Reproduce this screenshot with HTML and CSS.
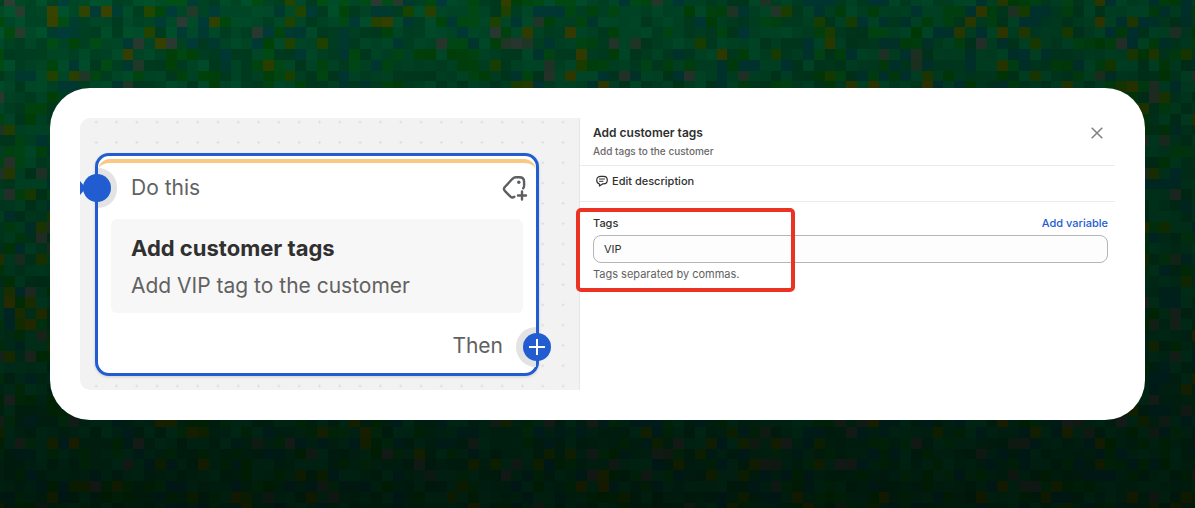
FILE: index.html
```
<!DOCTYPE html>
<html lang="en">
<head>
    <meta charset="UTF-8">
    <meta name="viewport" content="width=device-width, initial-scale=1.0">
    <title>Add customer tags</title>
    <link rel="stylesheet" href="styles.css">
</head>
<body>
    <canvas class="mosaic" id="mosaic" aria-hidden="true"></canvas>

    <main class="card">
        <section class="workflow">
            <svg class="grid-dots" aria-hidden="true">
                <defs>
                    <pattern id="dots" x="6" y="-6" width="20.3" height="20.3" patternUnits="userSpaceOnUse">
                        <path d="M10.2 8.7v3M8.7 10.2h3" stroke="#dedede" stroke-width="1.1"/>
                    </pattern>
                </defs>
                <rect width="100%" height="100%" fill="url(#dots)"/>
            </svg>

            <article class="node">
                <span class="port port-in">
                    <svg viewBox="0 0 56 40" aria-hidden="true">
                        <path d="M4 13l6 7-6 7z" fill="#215dd0"/>
                        <circle cx="21" cy="20" r="14" fill="#215dd0"/>
                    </svg>
                </span>
                <header class="node-header">
                    <span>Do this</span>
                    <svg class="tag-icon" viewBox="0 0 26 26" fill="none" stroke="#5c5f62" stroke-width="2.4" stroke-linecap="round" stroke-linejoin="round" aria-hidden="true">
                        <path d="M12.300 21.800q-2 1.600-3.800-.1l-5.700-5.900q-1.700-1.900 0-3.800L10.500 3.800q1.500-1.500 3.300-1.500H17.500q4.600 0 4.600 4.600v3.500q0 1.700-.9 2.900"/>
                        <path d="M20 16.500v8M16 20.500h8"/>
                        <circle cx="16.800" cy="7.300" r="1.700" fill="#5c5f62" stroke="none"/>
                    </svg>
                </header>
                <div class="node-body">
                    <h2>Add customer tags</h2>
                    <p>Add VIP tag to the customer</p>
                </div>
                <footer class="node-footer">Then</footer>
                <button class="port port-out" type="button" aria-label="Add step">
                    <svg viewBox="0 0 28 28" aria-hidden="true">
                        <circle cx="14" cy="14" r="14" fill="#215dd0"/>
                        <path d="M14 6v16M6 14h16" stroke="#fff" stroke-width="2"/>
                    </svg>
                </button>
            </article>
        </section>

        <section class="panel">
            <header class="panel-header">
                <div>
                    <h1>Add customer tags</h1>
                    <p>Add tags to the customer</p>
                </div>
                <button class="close" type="button" aria-label="Close">
                    <svg viewBox="0 0 12 12" aria-hidden="true">
                        <path d="M.7.7l10.600 10.600M11.300.7L.7 11.300" stroke="#7d7f82" stroke-width="1.5"/>
                    </svg>
                </button>
            </header>
            <div class="panel-action">
                <button class="edit" type="button">
                    <svg viewBox="0 0 12 12" fill="none" stroke="#303030" stroke-width="1.200" stroke-linecap="round" stroke-linejoin="round" aria-hidden="true">
                        <path d="M3.500 9C1.500 8.500.7 7 .7 5.300.7 3 2.300 1.300 4.700 1.300h2.800c2.300 0 3.800 1.500 3.800 3.700S9.800 8.900 7.500 8.900H6.500L3.500 11z"/>
                        <path d="M3.500 4h5M3.500 6.300h3.500" stroke-width="1"/>
                    </svg>
                    Edit description
                </button>
            </div>
            <form class="field">
                <div class="field-top">
                    <label for="tags">Tags</label>
                    <a href="#">Add variable</a>
                </div>
                <input id="tags" type="text" value="VIP" aria-describedby="tags-help">
                <p id="tags-help">Tags separated by commas.</p>
                <span class="highlight"></span>
            </form>
        </section>
    </main>

    <script src="mosaic.js"></script>
</body>
</html>
```
FILE: styles.css
```
* {
    margin: 0;
    padding: 0;
    box-sizing: border-box;
}

body {
    font-family: Inter, 'Liberation Sans', sans-serif;
    background: #001f16;
    min-height: 100vh;
    padding: 0 50px;
    display: flex;
    align-items: center;
    color: #303030;
}

button {
    border: none;
    background: none;
    font: inherit;
    color: inherit;
    cursor: pointer;
}

svg {
    display: block;
}

.mosaic {
    position: fixed;
    inset: 0;
    width: 100%;
    height: 100%;
    z-index: -1;
}

.card {
    flex: 1;
    display: grid;
    grid-template-columns: 500fr 535fr;
    background: #fff;
    border-radius: 40px;
    padding: 30px;
}

/* workflow canvas */
.workflow {
    position: relative;
    padding: 35px 40px 14px 15px;
    background: #f2f2f2;
    border-radius: 10px 0 0 10px;
    border-right: 1px solid #e6e6e6;
}

.grid-dots {
    position: absolute;
    inset: 0;
    width: 100%;
    height: 100%;
}

.node {
    position: relative;
    background: #fff;
    border: 3px solid #215dd0;
    border-radius: 14px;
    box-shadow: 0 1px 3px rgba(0, 0, 0, 0.15);
    padding: 4px 13px 8px;
}

.node::before {
    content: "";
    position: absolute;
    inset: 3px 0 0;
    border-top: 4px solid #fac882;
    border-radius: 12px 12px 0 0;
}

.node-header,
.node-footer {
    position: relative;
    font-size: 21px;
    line-height: 24px;
    color: #616161;
}

.node-header {
    display: flex;
    justify-content: space-between;
    align-items: center;
    padding: 16px 0 19px 20px;
}

.tag-icon {
    width: 26px;
    height: 26px;
    margin: -1px -5px -1px 0;
}

.node-body {
    background: #f7f7f7;
    border-radius: 6px;
    padding: 15px 20px 13px;
}

.node-body h2 {
    font-size: 22px;
    line-height: 28px;
    font-weight: 700;
}

.node-body p {
    font-size: 21px;
    line-height: 28px;
    margin-top: 10px;
    color: #616161;
}

.node-footer {
    padding: 21px 20px 7px 0;
    text-align: right;
}

.port {
    position: absolute;
}

/* grey halo shows only inside the node */
.port::before {
    content: "";
    position: absolute;
    width: 20px;
    height: 40px;
    background: #e3e3e3;
}

.port-in {
    left: -22px;
    top: 12px;
    width: 56px;
    height: 40px;
}

.port-in::before {
    left: 22px;
    width: 19px;
    border-radius: 0 20px 20px 0;
}

.port-out {
    right: -15px;
    bottom: 12px;
    width: 28px;
    height: 28px;
}

.port-out::before {
    left: -7px;
    top: -6px;
    border-radius: 20px 0 0 20px;
}

.port svg {
    position: relative;
}

/* settings panel */
.panel-header {
    display: flex;
    justify-content: space-between;
    align-items: flex-start;
    padding: 7px 12px 7px 13px;
    border-bottom: 1px solid #ebebeb;
}

.panel-header h1 {
    font-size: 12px;
    line-height: 16px;
    font-weight: 600;
}

.panel-header p {
    font-size: 10px;
    line-height: 14px;
    font-weight: 500;
    margin-top: 3px;
    color: #6a6a6a;
}

.close {
    padding: 2px 0;
}

.close svg {
    width: 12px;
    height: 12px;
}

.panel-action {
    padding: 7px 14px 12px 16px;
    border-bottom: 1px solid #ebebeb;
}

.edit {
    display: flex;
    align-items: center;
    gap: 4px;
    font-size: 11px;
    line-height: 16px;
    font-weight: 500;
}

.edit svg {
    width: 12px;
    height: 12px;
}

.field {
    position: relative;
    padding: 13px 7px 0 13px;
}

.field-top {
    display: flex;
    justify-content: space-between;
    font-size: 11px;
    line-height: 16px;
    font-weight: 500;
}

.field-top a {
    color: #215dd0;
    text-decoration: none;
}

.field input {
    display: block;
    width: 100%;
    height: 28px;
    margin-top: 4px;
    padding: 0 10px;
    border: 1px solid #b5b5b5;
    border-radius: 8px;
    background: #fdfdfd;
    font: 11px/16px Inter, 'Liberation Sans', sans-serif;
    color: #303030;
}

.field p {
    font-size: 11px;
    line-height: 16px;
    margin-top: 3px;
    color: #616161;
}

.highlight {
    position: absolute;
    left: -4px;
    top: 6px;
    width: 219px;
    height: 84px;
    border: 4px solid #ec3323;
    border-radius: 5px;
    pointer-events: none;
}
```
FILE: mosaic.js
```
const canvas = document.getElementById('mosaic');
const ctx = canvas.getContext('2d');
const CELL = 10.8;

// small seeded generator, so that the pattern stays the same on every load
let seed = 7;
function rand() {
    seed = (seed + 0x6D2B79F5) | 0;
    let t = Math.imul(seed ^ (seed >>> 15), 1 | seed);
    t = (t + Math.imul(t ^ (t >>> 7), 61 | t)) ^ t;
    return ((t ^ (t >>> 14)) >>> 0) / 4294967296;
}

function draw() {
    const w = canvas.width = window.innerWidth;
    const h = canvas.height = window.innerHeight;
    seed = 7;

    for (let row = 0; row * CELL - 5 < h; row++) {
        for (let col = 0; col * CELL - 7 < w; col++) {
            const x = Math.round(col * CELL - 7);
            const y = Math.round(row * CELL - 5);
            const light = 1 - 0.66 * (y / h) - 0.25 * (x / w) * (1 - y / h);
            const kind = rand();
            const v = rand();
            let rgb;
            if (kind < 0.58) {
                rgb = [0, 62 + v * 22, 32 + v * 14];
            } else if (kind < 0.74) {
                rgb = [0, 70 + v * 12, 8 + v * 16];
            } else if (kind < 0.87) {
                rgb = [0, 62, 50 + v * 10];
            } else if (kind < 0.95) {
                rgb = [24 + v * 36, 74 - v * 6, 0];
            } else {
                rgb = [34 + v * 14, 62, 42 + v * 14];
            }
            const [r, g, b] = rgb.map(c => Math.round(c * light));
            ctx.fillStyle = `rgb(${r}, ${g}, ${b})`;
            ctx.fillRect(x, y, 11, 11);
        }
    }
}

draw();
window.addEventListener('resize', draw);
```
